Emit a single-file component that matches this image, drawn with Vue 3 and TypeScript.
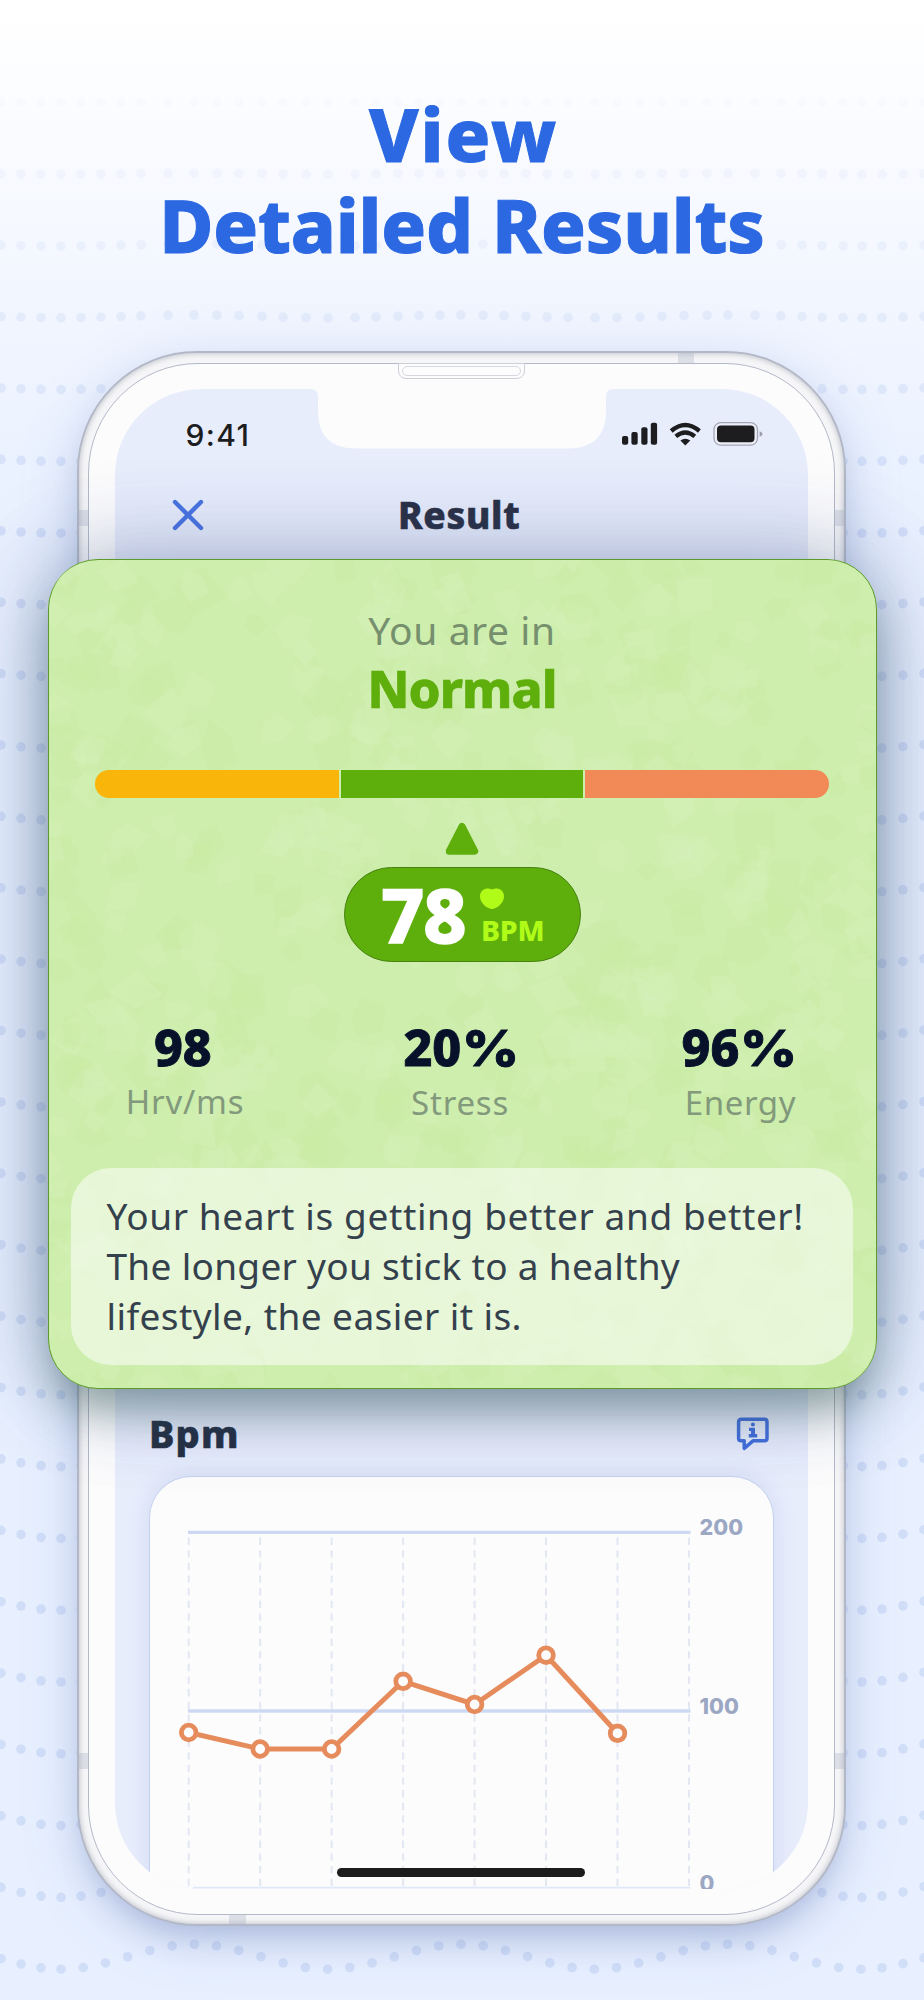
<script setup lang="ts">
interface Dot { x: number; y: number; o: number }
interface Stat { value: string; percent: boolean; label: string; kind: string }

const upperX: number[] = [1, 21, 41, 61, 81, 101, 121, 141, 168, 194, 217, 239, 262, 283, 306, 328, 355, 376, 398, 419, 440, 461, 483, 504, 526, 547, 568, 595, 617, 640, 662, 684, 707, 728, 755, 781, 802, 822, 843, 862, 882, 903, 924]
const lowerX: number[] = [1, 21, 41, ...Array.from({ length: 37 }, (_, i) => 61 + i * 22.22), 882, 903, 924]

// Rows of dots whose wave grows from flat at the top to full height at the bottom
const dots: Dot[] = []
for (let row = 0; row < 27; row++) {
  const base = 102.4 + row * 71.8
  const amp = row * 0.48
  const xs = row === 26 ? lowerX : upperX
  for (const x of xs) {
    dots.push({
      x,
      y: base - amp + amp * Math.cos((2 * Math.PI * (x - 61)) / 266.8),
      o: Math.min(1, 0.12 + row * 0.14),
    })
  }
}

// Seeded facets for the card's paper-like texture
let seed = 7
const rand = (): number => {
  seed = (seed * 16807) % 2147483647
  return seed / 2147483647
}
const facets = Array.from({ length: 700 }, () => {
  const cx = rand() * 828
  const cy = rand() * 828
  const r = 12 + rand() * 14
  const n = 4 + Math.floor(rand() * 2)
  const turn = rand() * 6.28
  const points = Array.from({ length: n }, (_, i) => {
    const a = turn + (i / n) * 6.28
    const d = r * (0.6 + rand() * 0.6)
    return `${(cx + Math.cos(a) * d).toFixed(1)},${(cy + Math.sin(a) * d).toFixed(1)}`
  }).join(' ')
  return { points, light: rand() > 0.5 }
})

const stats: Stat[] = [
  { value: '98', percent: false, label: 'Hrv/ms', kind: 'hrv' },
  { value: '20', percent: true, label: 'Stress', kind: 'stress' },
  { value: '96', percent: true, label: 'Energy', kind: 'energy' },
]
const message: string[] = ['Your heart is getting better and better!', 'The longer you stick to a healthy', 'lifestyle, the easier it is.']

const columns: number[] = Array.from({ length: 8 }, (_, i) => 38.7 + i * 71.47)
const levels: number[] = [255.5, 272, 272, 204.3, 227.5, 178.2, 256.3]
const points = levels.map((y, i) => ({ x: columns[i], y }))
const line = points.map((p) => `${p.x},${p.y}`).join(' ')
</script>

<template>
  <main class="page">
    <svg class="dots" width="924" height="2000" viewBox="0 0 924 2000">
      <circle v-for="(d, i) in dots" :key="i" :cx="d.x" :cy="d.y" r="4.8" :opacity="d.o" fill="#6f8fdc" fill-opacity=".19" />
    </svg>

    <h1 class="headline"><span class="view">View</span><span class="detail">Detailed Results</span></h1>

    <section class="phone">
      <i class="band top" /><i class="band left-up" /><i class="band right-up" />
      <i class="band left-low" /><i class="band right-low" /><i class="band bottom" />
      <div class="bezel">
        <div class="speaker"><i /></div>
        <div class="screen">
          <svg class="notch" width="304" height="60" viewBox="0 0 304 60">
            <path d="M0 0C6 0 8 3 8 9V22Q8 59.5 46 59.5H258Q296 59.5 296 22V9C296 3 298 0 304 0Z" fill="#fcfcfd" />
          </svg>
          <div class="status">
            <span class="time">9:41</span>
            <svg class="system" width="144" height="26" viewBox="620 421 144 26">
              <g fill="#1d1d1f">
                <rect x="622" y="436" width="6.2" height="8.7" rx="2" />
                <rect x="631.4" y="432" width="6.3" height="12.7" rx="2" />
                <rect x="641.3" y="427.3" width="6.2" height="17.4" rx="2" />
                <rect x="650.8" y="422.8" width="6.3" height="21.9" rx="2" />
                <path d="M680.4 440.5Q685.3 436.8 690.3 440.5L685.3 445.6Z" />
              </g>
              <g fill="none" stroke="#1d1d1f" stroke-width="4.3">
                <path d="M671.2 431Q685.3 418.8 699.4 431" />
                <path d="M675.8 436.4Q685.3 428.4 694.8 436.4" />
              </g>
              <rect x="714" y="422.6" width="43.5" height="22.6" rx="7" fill="#eceff8" stroke="#a3a7b4" stroke-width="1.3" />
              <rect x="717" y="425.6" width="37.5" height="16.6" rx="4" fill="#1d1d1f" />
              <path d="M759.6 431.2Q762.6 432.2 762.6 434Q762.6 435.8 759.6 436.8Z" fill="#9b9fae" />
            </svg>
          </div>
          <div class="nav">
            <svg width="32" height="32" viewBox="0 0 32 32"><path d="M3 3L29 29M29 3L3 29" stroke="#4a74e2" stroke-width="4.4" stroke-linecap="round" /></svg>
            <h2>Result</h2>
          </div>
          <div class="section-head">
            <h3>Bpm</h3>
            <svg width="34" height="34" viewBox="0 0 34 34">
              <path d="M5.2 2.3H28.4Q31 2.3 31 4.9V21.2Q31 23.8 28.4 23.8H17L8.2 31.3V23.8H5.2Q2.6 23.8 2.6 21.2V4.9Q2.6 2.3 5.2 2.3Z" fill="none" stroke="#4470de" stroke-width="3.5" stroke-linejoin="round" />
              <g fill="#4470de"><circle cx="16.9" cy="7.6" r="2" /><path d="M13 10.8H19V17H21.2V20.4H12.8V17H15V14H13Z" /></g>
            </svg>
          </div>
          <div class="chart">
            <svg width="623" height="413" viewBox="0 0 623 413">
              <g stroke="#e3e7f2" stroke-width="2" stroke-dasharray="7.4 5.23">
                <line v-for="x in columns" :key="x" :x1="x" :x2="x" y1="60.5" y2="411" />
              </g>
              <path d="M38 55.4H540.5M38 234H540.5" stroke="#cdd9f3" stroke-width="3.4" />
              <path d="M43 410.6H540.5" stroke="#dfe7f8" stroke-width="1.6" />
              <polyline :points="line" fill="none" stroke="#e68b5b" stroke-width="5" />
              <circle v-for="p in points" :key="p.x" :cx="p.x" :cy="p.y" r="7.3" fill="#fcfcfc" stroke="#e68b5b" stroke-width="4.8" />
              <g class="axis">
                <text x="549.6" y="58.4">200</text>
                <text x="549.6" y="236.6">100</text>
                <text x="549.6" y="414.4">0</text>
              </g>
            </svg>
          </div>
          <i class="home" />
        </div>
      </div>
    </section>

    <section class="card">
      <svg class="texture" viewBox="0 0 826 826" preserveAspectRatio="none">
        <polygon v-for="(f, i) in facets" :key="i" :points="f.points" :class="f.light ? 'light' : 'dark'" />
      </svg>
      <p class="lead">You are in</p>
      <p class="verdict">Normal</p>
      <div class="scale"><i class="low" /><i class="mid" /><i class="high" /></div>
      <svg class="pointer" width="34" height="34" viewBox="0 0 34 34"><path d="M17 4.4L29.7 29.2H4.3Z" fill="#5eae0c" stroke="#5eae0c" stroke-width="7" stroke-linejoin="round" /></svg>
      <div class="pill">
        <strong>78</strong>
        <div class="unit">
          <svg width="24" height="22" viewBox="0 0 24 22"><path d="M12 1.5C16.5-1 24 .8 24 8.5C24 15.5 16 21 12 21C8 21 0 15.5 0 8.5C0 .8 7.5-1 12 1.5Z" fill="#b1fb18" /></svg>
          <span>BPM</span>
        </div>
      </div>
      <div class="stats">
        <div v-for="s in stats" :key="s.label" class="stat" :class="s.kind">
          <b>{{ s.value }}<em v-if="s.percent">%</em></b>
          <span>{{ s.label }}</span>
        </div>
      </div>
      <div class="message"><span v-for="m in message" :key="m">{{ m }}</span></div>
    </section>
  </main>
</template>

<style>
body { margin: 0; }
</style>

<style scoped>
.page { position: relative; box-sizing: border-box; width: 924px; height: 2000px; padding-top: 87.5px; overflow: hidden; font-family: "Noto Sans", "Open Sans", sans-serif; background: linear-gradient(#fff 0, #fcfdff 90px, #f8faff 170px, #f2f6ff 300px, #ebf2ff 460px, #e8f0ff 700px, #e8f0ff 100%); }
h1, h2, h3, p { margin: 0; }
i, em { font-style: normal; }
i { display: block; }
.dots { position: absolute; left: 0; top: 0; }

.headline { position: relative; display: flex; flex-direction: column; align-items: center; height: 263.5px; font-size: 74px; font-weight: 800; line-height: 91.4px; color: #2b68e2; white-space: nowrap; -webkit-text-stroke: 1px #2b68e2; }
.view { margin-left: 3px; letter-spacing: 2px; }
.detail { letter-spacing: -.2px; }

.phone { position: relative; box-sizing: border-box; width: 769px; height: 1575px; margin-left: 77px; padding: 10px 9px 9px; border: 2px solid #b3b8c6; border-radius: 120px; background: #f6f6f8; box-shadow: inset 0 0 5px 1px rgba(150, 155, 170, .5), 0 18px 30px -8px rgba(80, 100, 160, .3), 0 10px 60px rgba(80, 110, 190, .18); }
.band { position: absolute; background: rgba(150, 158, 180, .26); }
.band.top { left: 599px; top: 0; width: 16px; height: 10px; }
.band.left-up { left: 0; top: 157px; width: 9px; height: 16px; }
.band.right-up { right: 0; top: 157px; width: 9px; height: 16px; }
.band.left-low { left: 0; top: 1400px; width: 9px; height: 16px; }
.band.right-low { right: 0; top: 1400px; width: 9px; height: 16px; }
.band.bottom { left: 150px; bottom: 0; width: 17px; height: 10px; }
.bezel { position: relative; box-sizing: border-box; width: 747px; height: 1552px; padding: 24.5px 25.5px; border: 1.5px solid #b4b9c8; border-radius: 110px; background: #fcfcfd; }
.speaker { position: absolute; left: 309px; top: -1px; box-sizing: border-box; width: 127px; height: 16px; padding: 2px 3px; border: 1px solid #cdd0d9; border-radius: 0 0 8px 8px; }
.speaker i { box-sizing: border-box; height: 10px; border: 1px solid #d6d8e0; border-radius: 5px; }

.screen { position: relative; width: 693px; height: 1500px; overflow: hidden; border-radius: 86px; background: #e8edfc; }
.notch { position: absolute; left: 195px; top: 0; }
.status { position: relative; display: flex; box-sizing: border-box; justify-content: space-between; align-items: flex-start; height: 90px; padding: 32px 44px 0 71px; }
.time { margin-top: -.5px; font: 500 30px/30px Inter, "Liberation Sans", sans-serif; letter-spacing: 1.4px; color: #1d1d1f; }
.nav { display: flex; align-items: flex-start; box-sizing: border-box; height: 92px; padding: 20px 57px 0; }
h2 { margin: -8.5px 0 0 194.5px; font-size: 37px; font-weight: 800; line-height: 50px; letter-spacing: .7px; color: #2a3045; -webkit-text-stroke: .6px #2a3045; }
.section-head { display: flex; justify-content: space-between; align-items: flex-start; box-sizing: border-box; height: 62px; margin: 843.5px 38px 0 34.5px; }
.section-head svg { margin: 3px 0 0; }
h3 { font-size: 38px; font-weight: 800; line-height: 39px; letter-spacing: 1.2px; color: #263044; -webkit-text-stroke: .6px #263044; }
.chart { box-sizing: border-box; width: 625px; height: 460px; margin-left: 34.5px; border: 1.6px solid #c4d2f0; border-radius: 42px 42px 0 0; background: #fcfcfd; box-shadow: 0 0 22px rgba(90, 120, 190, .16); }
.chart svg { display: block; }
.axis { font-family: Inter, "Noto Sans", sans-serif; font-size: 21.5px; font-weight: 800; fill: #9ba7c3; }
.home { position: absolute; left: 222px; bottom: 11.5px; width: 248px; height: 9.4px; border-radius: 5px; background: #1c1c1d; }

.card { position: absolute; left: 47.5px; top: 559px; box-sizing: border-box; width: 829px; height: 829.5px; display: flex; flex-direction: column; align-items: center; border: 1.6px solid #5c9a2b; border-radius: 50px; background: #cdeeac; box-shadow: 0 0 90px rgba(50, 70, 120, .34), 0 6px 110px rgba(60, 90, 170, .12), 0 26px 44px -6px rgba(30, 75, 45, .38); }
.texture { position: absolute; left: 0; top: 0; width: 100%; height: 100%; border-radius: 48px; overflow: hidden; }
.light { fill: #d6f1bb; fill-opacity: .34; }
.dark { fill: #c8eaa4; fill-opacity: .26; }
.card > :not(.texture) { position: relative; flex: none; }
.lead { margin-top: 42.5px; font-size: 39px; line-height: 54px; letter-spacing: .6px; color: #76906e; }
.verdict { margin-top: 1.5px; font-size: 51px; font-weight: 800; line-height: 60px; letter-spacing: -.9px; color: #5eae0c; -webkit-text-stroke: .6px #5eae0c; }
.scale { display: grid; grid-template-columns: 244px 242px 244px; gap: 2px; width: 734px; height: 28.5px; margin-top: 51.5px; border-radius: 14.2px; overflow: hidden; }
.low { background: #fab50a; }
.mid { background: #5eae0c; }
.high { background: #f28a57; }
.pointer { margin-top: 23.5px; }
.pill { display: flex; box-sizing: border-box; width: 237px; height: 95px; margin-top: 11px; padding-left: 36.5px; border: 1.6px solid #468210; border-radius: 47.5px; background: #5eae0c; }
.pill strong { width: 99px; font-size: 75px; font-weight: 800; line-height: 92px; letter-spacing: -1px; color: #fff; -webkit-text-stroke: 1.4px #fff; }
.unit { display: flex; flex-direction: column; padding-top: 20.5px; color: #b1fb18; }
.unit span { margin-left: 1px; font-size: 28.5px; font-weight: 800; line-height: 40px; letter-spacing: -.2px; }
.stats { display: flex; width: 829px; height: 120.5px; margin-top: 55px; margin-bottom: 31px; }
.stat { display: flex; flex-direction: column; align-items: center; white-space: nowrap; }
.hrv { width: 274px; }
.stress { width: 278px; }
.energy { width: 281px; }
.stat b { font-size: 50px; font-weight: 800; line-height: 60px; color: #07122a; -webkit-text-stroke: .9px #07122a; }
.stat em { display: inline-block; margin-left: 1px; font-family: Inter, "Noto Sans", sans-serif; transform: scaleX(1.11); transform-origin: left center; }
.stat span { margin: 3.5px 0 0 2.5px; font-size: 33px; line-height: 44px; color: #82997c; letter-spacing: .8px; }
.hrv b { margin-right: 2px; }
.stress span { margin-left: 3px; }
.energy span { margin-left: 7.5px; letter-spacing: .6px; }
.message { box-sizing: border-box; width: 782px; height: 197px; padding: 22.5px 0 0 35.5px; border-radius: 40px; background: rgba(255, 255, 255, .52); font-size: 37px; line-height: 50.2px; color: #34414d; white-space: nowrap; }
.message span { display: block; letter-spacing: .62px; }
.message span:nth-child(2) { letter-spacing: .3px; }
.message span:nth-child(3) { letter-spacing: .42px; }
</style>
